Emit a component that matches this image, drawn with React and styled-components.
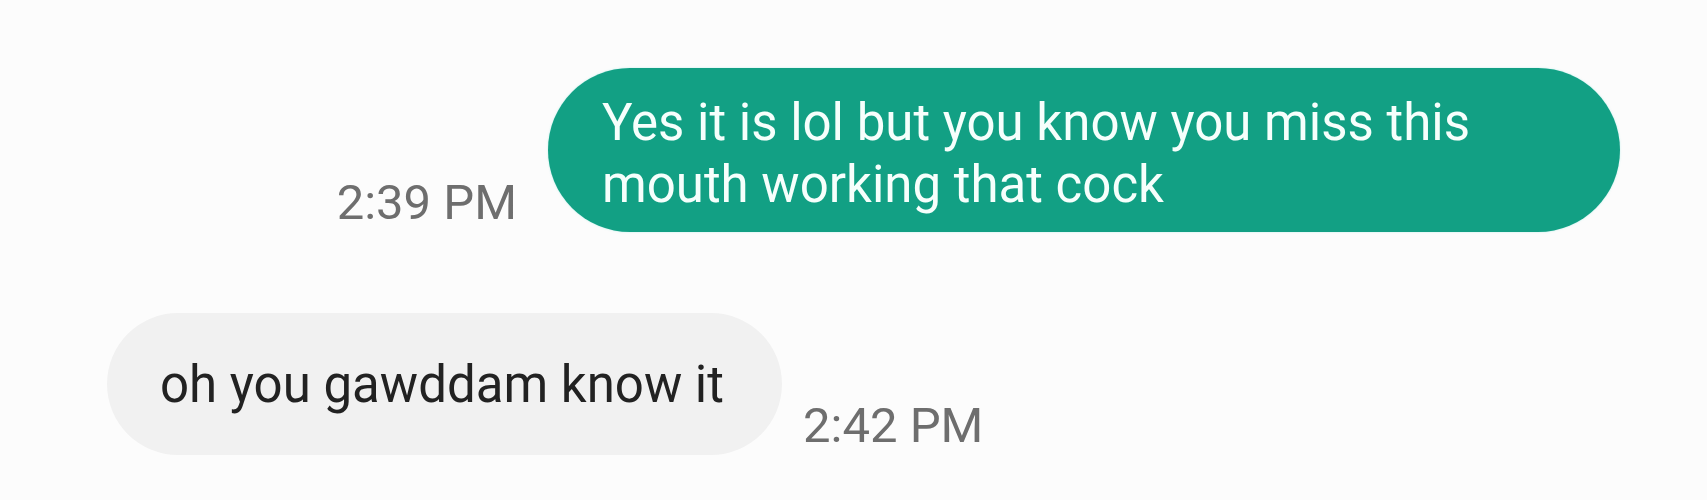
import React from "react";
import styled, { createGlobalStyle } from "styled-components";

const GlobalStyle = createGlobalStyle`
  html, body {
    margin: 0;
    padding: 0;
    background: #fcfcfc;
  }
  body {
    font-family: Roboto, "Noto Sans", "Liberation Sans", sans-serif;
    width: 1707px;
    height: 500px;
    overflow: hidden;
  }
`;

const Thread = styled.div`
  display: flex;
  flex-direction: column;
  gap: 81px;
  padding-top: 68px;
  width: 1707px;
  box-sizing: border-box;
`;

const Row = styled.div`
  display: flex;
  align-items: flex-end;
  justify-content: ${(p) => (p.$out ? "flex-end" : "flex-start")};
  gap: ${(p) => (p.$out ? "31px" : "21px")};
  padding: ${(p) => (p.$out ? "0 87px 0 0" : "0 0 0 107px")};
`;

const Bubble = styled.div`
  box-sizing: border-box;
  width: ${(p) => p.$width}px;
  padding: ${(p) => p.$pad};
  border-radius: 82px;
  background: ${(p) => (p.$out ? "#12a084" : "#f1f1f1")};
  color: ${(p) => (p.$out ? "#f6fffc" : "#222222")};
  font-size: 51px;
  line-height: 62px;
  box-shadow: ${(p) => (p.$out ? "0 0 2px rgba(120, 230, 220, 0.5)" : "none")};
`;

const Time = styled.span`
  font-size: 49px;
  line-height: 56px;
  color: #6e6e6e;
  margin-bottom: 1px;
  white-space: nowrap;
`;

export default function App() {
  return (
    <>
      <GlobalStyle />
      <Thread>
        <Row $out>
          <Time>2:39 PM</Time>
          <Bubble $out $width={1072} $pad="24px 54px 16px 54px">
            Yes it is lol but you know you miss this mouth working that cock
          </Bubble>
        </Row>
        <Row>
          <Bubble $width={675} $pad="41px 50px 39px 53px">
            oh you gawddam know it
          </Bubble>
          <Time>2:42 PM</Time>
        </Row>
      </Thread>
    </>
  );
}
